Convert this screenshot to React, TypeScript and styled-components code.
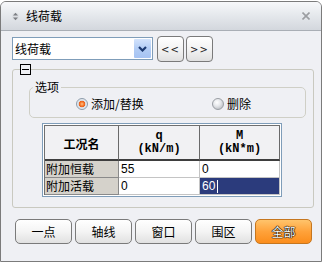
import React from "react";
import styled, { createGlobalStyle } from "styled-components";

const GlobalStyle = createGlobalStyle`
  html, body { margin: 0; padding: 0; background: #ffffff; }
  body { font-family: "Noto Sans CJK SC", "Noto Sans", sans-serif; font-size: 12px; color: #000; }
  * { box-sizing: border-box; }
`;

const Window = styled.div`
  width: 322px;
  height: 261px;
  margin-top: 1px;
  border: 1px solid #7b7b7b;
  border-radius: 6px 6px 0 0;
  background: #eff0f4;
  overflow: hidden;
  display: flex;
  flex-direction: column;
`;

const TitleBar = styled.div`
  flex: none;
  height: 29px;
  border-bottom: 1px solid #a9aeb5;
  background: linear-gradient(#f7f8fa, #e6e9ed 45%, #d3d7dd);
  display: flex;
  align-items: center;
  padding: 0 11px 0 11px;
`;

const TitleText = styled.span`
  margin-left: 7px;
  font-size: 12px;
  line-height: 14px;
  color: #000;
`;

const CloseIcon = styled.svg`
  margin-left: auto;
  display: block;
`;

const Body = styled.div`
  display: flex;
  flex-direction: column;
  padding: 5px 0 0 11px;
`;

const TopRow = styled.div`
  display: flex;
  align-items: flex-start;
  height: 26px;
`;

const Combo = styled.div`
  width: 141px;
  height: 23px;
  margin-top: 1px;
  margin-right: 2px;
  border: 1px solid #7f9db9;
  background: #ffffff;
  display: flex;
  align-items: center;
  padding-left: 2px;
  font-size: 12px;
`;

const DropButton = styled.span`
  margin-left: auto;
  margin-right: 1px;
  width: 17px;
  height: 19px;
  border-radius: 1px;
  background: linear-gradient(#d3e3fc, #b3cdf5 50%, #a6c3f3);
  display: flex;
  align-items: center;
  justify-content: center;
`;

const NavButton = styled.button`
  width: 27px;
  height: 26px;
  margin-left: 2px;
  padding: 0;
  border: 1px solid #7a7a7a;
  border-radius: 4px;
  background: linear-gradient(#ffffff, #f3f3f3 50%, #e0e0e0);
  font-family: "DejaVu Sans", sans-serif;
  font-size: 10px;
  letter-spacing: 1px;
  color: #222;
`;

const GroupBox = styled.fieldset`
  margin: 2px 0 0 0;
  width: 302px;
  min-width: 0;
  padding: 0 0 10px 0;
  border: 1px solid #c9c9c0;
  border-radius: 3px;
`;

const ToggleLegend = styled.legend`
  padding: 0;
  margin-left: 7px;
  line-height: 0;
`;

const OptionsBox = styled.fieldset`
  margin: 5px 7px 0 16px;
  min-width: 0;
  padding: 0 0 3px 0;
  border: 1px solid #cfcfc6;
  border-radius: 5px;
`;

const OptionsLegend = styled.legend`
  padding: 0 2px;
  margin-left: 3px;
  font-size: 12px;
  line-height: 14px;
`;

const RadioRow = styled.div`
  height: 20px;
  display: grid;
  grid-template-columns: 136px auto;
  align-items: center;
  padding-left: 46px;
`;

const RadioItem = styled.label`
  display: flex;
  align-items: center;
  gap: 3px;
  font-size: 12px;
  line-height: 14px;
`;

const RadioCircle = styled.span<{ $on: boolean }>`
  width: 12px;
  height: 12px;
  border-radius: 50%;
  border: 1px solid ${(p) => (p.$on ? "#8e9cab" : "#9a9ea4")};
  background: ${(p) =>
    p.$on
      ? "radial-gradient(circle at 50% 50%, #ffc08a 0, #f6782a 2px, #e8601c 3px, #d9e0e8 3.6px, #f7f9fb 100%)"
      : "radial-gradient(circle at 40% 35%, #ffffff 0, #e6e8eb 40%, #a9adb3 100%)"};
`;

const TableFrame = styled.div`
  margin: 5px 0 0 29px;
  width: 240px;
  border: 1px solid #7f9db9;
  padding: 1px;
  background: #ffffff;
`;

const Grid = styled.div`
  display: grid;
  grid-template-columns: 74px 81px 80px;
  grid-template-rows: 35px 17px 17px;
  border-top: 1px solid #6f6f6f;
  border-left: 1px solid #6f6f6f;
  width: 236px;
`;

const HeadCell = styled.div`
  background: #f1f1f3;
  border-right: 1px solid #6a6a6a;
  border-bottom: 2px solid #3e3e3e;
  display: flex;
  flex-direction: column;
  align-items: center;
  justify-content: center;
`;

const HeadTitle = styled.span`
  font-size: 12px;
  font-weight: 700;
  line-height: 14px;
  margin-top: 2px;
`;

const HeadUnit = styled.span`
  font-family: "Liberation Mono", "DejaVu Sans Mono", monospace;
  font-weight: 700;
  font-size: 12px;
  line-height: 13px;
  text-align: center;
  white-space: pre;
`;

const LabelCell = styled.div`
  background: #d5d2cb;
  border-right: 1px solid #8a8a8a;
  border-bottom: 1px solid #8a8a8a;
  padding-left: 1px;
  font-size: 12px;
  line-height: 15px;
  white-space: nowrap;
  overflow: hidden;
`;

const ValueCell = styled.div<{ $selected?: boolean }>`
  background: ${(p) => (p.$selected ? "#2b3b7c" : "#ffffff")};
  color: ${(p) => (p.$selected ? "#ffffff" : "#000000")};
  border-right: 1px solid #c4c4c4;
  border-bottom: 1px solid #c4c4c4;
  padding-left: 2px;
  font-family: "Liberation Sans", Arial, sans-serif;
  font-size: 12px;
  line-height: 15px;
  display: flex;
  align-items: center;
`;

const Caret = styled.span`
  display: inline-block;
  width: 1px;
  height: 13px;
  margin-left: 2px;
  background: #ffffff;
`;

const ActionRow = styled.div`
  display: flex;
  gap: 3px;
  margin: 11px 0 0 3px;
`;

const ActionButton = styled.button<{ $primary?: boolean }>`
  width: 57px;
  height: 25px;
  padding: 0;
  border-radius: 5px;
  border: 1px solid ${(p) => (p.$primary ? "#c5761f" : "#7a7a7a")};
  background: ${(p) =>
    p.$primary
      ? "linear-gradient(#ffc46c, #ffa23a 50%, #fb8d1c)"
      : "linear-gradient(#ffffff, #f4f4f4 50%, #e1e1e1)"};
  color: ${(p) => (p.$primary ? "#ffffff" : "#000000")};
  text-shadow: ${(p) =>
    p.$primary ? "0 0 1px #000, 0 0 1px #000, 0 0 1px #000, 0 0 1px #000" : "none"};
  font-family: "Noto Sans CJK SC", sans-serif;
  font-size: 12px;
  line-height: 14px;
`;

const rows = [
  { name: "附加恒载", q: "55", m: "0", sel: false },
  { name: "附加活载", q: "0", m: "60", sel: true },
];

export default function App() {
  return (
    <>
      <GlobalStyle />
      <Window>
        <TitleBar>
          <svg width="7" height="9" viewBox="0 0 7 9">
            <circle cx="3.5" cy="4.5" r="3.4" fill="#dcdfe3" />
            <path d="M3.5 0.8 L6 3.6 L1 3.6 Z" fill="#7c7f84" />
            <path d="M3.5 8.2 L6 5.4 L1 5.4 Z" fill="#7c7f84" />
          </svg>
          <TitleText>线荷载</TitleText>
          <CloseIcon width="8" height="8" viewBox="0 0 8 8">
            <path d="M0.5 0.5 L7.5 7.5 M7.5 0.5 L0.5 7.5" stroke="#9b9da1" strokeWidth="1.6" />
          </CloseIcon>
        </TitleBar>
        <Body>
          <TopRow>
            <Combo>
              线荷载
              <DropButton>
                <svg width="9" height="6" viewBox="0 0 9 6">
                  <path d="M1 1 L4.5 4.5 L8 1" stroke="#1c3a72" strokeWidth="2.2" fill="none" />
                </svg>
              </DropButton>
            </Combo>
            <NavButton>&lt;&lt;</NavButton>
            <NavButton>&gt;&gt;</NavButton>
          </TopRow>
          <GroupBox>
            <ToggleLegend>
              <svg width="11" height="11" viewBox="0 0 11 11">
                <rect x="0.5" y="0.5" width="10" height="10" fill="#eff0f4" stroke="#000" />
                <path d="M2 5.5 H9" stroke="#000" />
              </svg>
            </ToggleLegend>
            <OptionsBox>
              <OptionsLegend>选项</OptionsLegend>
              <RadioRow>
                <RadioItem>
                  <RadioCircle $on />
                  添加/替换
                </RadioItem>
                <RadioItem>
                  <RadioCircle $on={false} />
                  删除
                </RadioItem>
              </RadioRow>
            </OptionsBox>
            <TableFrame>
              <Grid>
                <HeadCell>
                  <HeadTitle>工况名</HeadTitle>
                </HeadCell>
                <HeadCell>
                  <HeadUnit>{"q\n(kN/m)"}</HeadUnit>
                </HeadCell>
                <HeadCell>
                  <HeadUnit>{"M\n(kN*m)"}</HeadUnit>
                </HeadCell>
                {rows.map((r) => (
                  <React.Fragment key={r.name}>
                    <LabelCell>{r.name}</LabelCell>
                    <ValueCell>{r.q}</ValueCell>
                    <ValueCell $selected={r.sel}>
                      {r.m}
                      {r.sel && <Caret />}
                    </ValueCell>
                  </React.Fragment>
                ))}
              </Grid>
            </TableFrame>
          </GroupBox>
          <ActionRow>
            <ActionButton>一点</ActionButton>
            <ActionButton>轴线</ActionButton>
            <ActionButton>窗口</ActionButton>
            <ActionButton>围区</ActionButton>
            <ActionButton $primary>全部</ActionButton>
          </ActionRow>
        </Body>
      </Window>
    </>
  );
}
